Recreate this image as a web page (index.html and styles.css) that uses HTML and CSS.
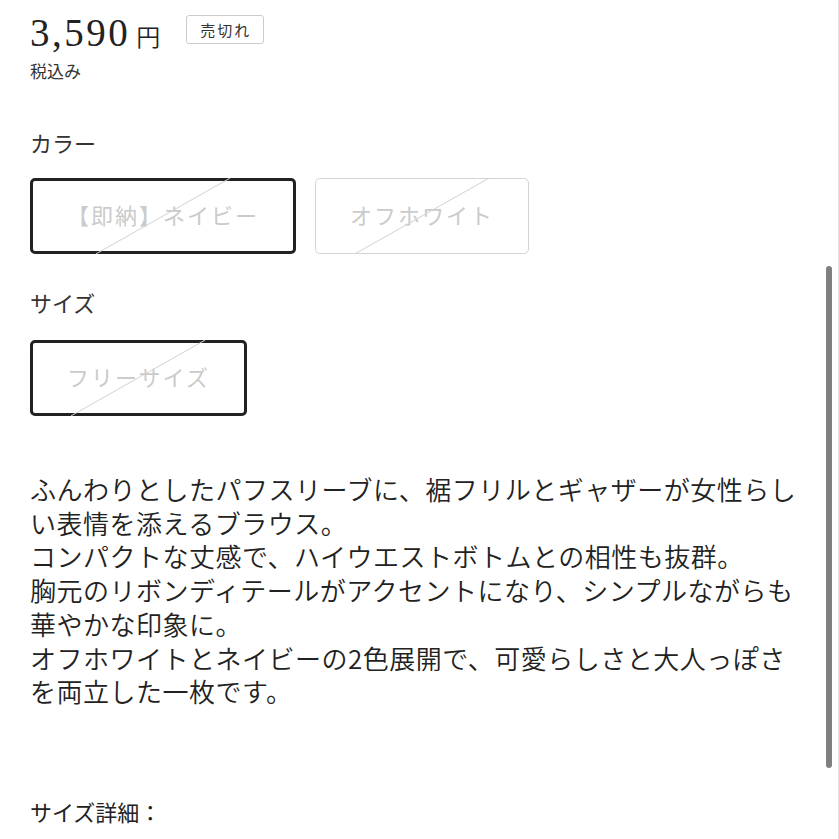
FILE: index.html
```html
<!DOCTYPE html>
<html lang="ja">
<head>
    <meta charset="UTF-8">
    <meta name="viewport" content="width=device-width, initial-scale=1.0">
    <title>商品詳細</title>
    <link rel="stylesheet" href="styles.css">
</head>
<body>
    <div class="product">
        <!-- 価格 -->
        <div class="price-row">
            <span class="price">3,590</span>
            <span class="yen">円</span>
            <span class="sold-out">売切れ</span>
        </div>
        <div class="tax">税込み</div>

        <!-- カラー選択 -->
        <div class="option-label label-color">カラー</div>
        <div class="option-list">
            <button class="option selected">【即納】ネイビー</button>
            <button class="option">オフホワイト</button>
        </div>

        <!-- サイズ選択 -->
        <div class="option-label label-size">サイズ</div>
        <div class="option-list">
            <button class="option selected">フリーサイズ</button>
        </div>

        <!-- 商品説明 -->
        <p class="description">
            ふんわりとしたパフスリーブに、裾フリルとギャザーが女性らしい表情を添えるブラウス。<br>
            コンパクトな丈感で、ハイウエストボトムとの相性も抜群。<br>
            胸元のリボンディテールがアクセントになり、シンプルながらも華やかな印象に。<br>
            オフホワイトとネイビーの2色展開で、可愛らしさと大人っぽさを両立した一枚です。
        </p>

        <div class="size-detail">サイズ詳細：</div>
    </div>

    <div class="scroll-track"></div>
    <div class="scroll-thumb"></div>
</body>
</html>
```

FILE: styles.css
```css
/* スタイル */
body {
    font-family: "Noto Sans CJK JP", sans-serif;
    background-color: #fff;
    color: #222;
    margin: 0;
    padding: 0;
}
.product {
    padding: 0 30px;
}
.price-row {
    display: flex;
    align-items: baseline;
    height: 38px;
    padding-top: 14px;
    line-height: 38px;
}
.price {
    font-family: "Liberation Serif", serif;
    font-size: 39px;
    letter-spacing: 2.5px;
    color: #222;
}
.yen {
    font-size: 24px;
    font-weight: 350;
    margin-left: 6px;
    color: #222;
}
.sold-out {
    align-self: flex-start;
    margin-top: 1px;
    margin-left: 26px;
    padding: 0 12px 0 13px;
    height: 27px;
    line-height: 27px;
    font-size: 15px;
    letter-spacing: 2px;
    color: #333;
    border: 1px solid #ccc;
    border-radius: 3px;
}
.tax {
    margin-top: 7px;
    font-size: 17px;
    line-height: 24px;
    color: #333;
}
.option-label {
    font-size: 22px;
    line-height: 30px;
    color: #333;
}
.label-color {
    margin-top: 44px;
}
.label-size {
    margin-top: 33px;
}
.option-list {
    display: flex;
    gap: 19px;
    margin-top: 21px;
}
.label-size + .option-list {
    margin-top: 23px;
}
.option {
    position: relative;
    box-sizing: border-box;
    height: 76px;
    padding: 0 34px 4px;
    font-family: "Noto Sans CJK JP", sans-serif;
    font-size: 22px;
    letter-spacing: 2px;
    color: #cbcbcb;
    background-color: #fff;
    border: 1px solid #d4d4d4;
    border-radius: 5px;
}
.option.selected {
    border: 3px solid #222;
}
/* 在庫切れの斜線 */
.option::after {
    content: "";
    position: absolute;
    left: 50%;
    top: 50%;
    width: 154px;
    height: 1px;
    background-color: #d2d2d2;
    transform: translate(-50%, -50%) rotate(-29.5deg);
}
.description {
    width: 775px;
    margin: 56px 0 0;
    font-size: 26px;
    font-weight: 350;
    letter-spacing: 0.5px;
    line-height: 33.7px;
    color: #222;
}
.size-detail {
    margin-top: 88px;
    font-size: 22px;
    line-height: 30px;
    color: #222;
}
.scroll-track {
    position: fixed;
    top: 0;
    right: 0;
    width: 1px;
    height: 100%;
    background-color: #e4e4e4;
}
.scroll-thumb {
    position: fixed;
    top: 266px;
    left: 826px;
    width: 6px;
    height: 502px;
    background-color: #808080;
    border-radius: 3px;
}
```
